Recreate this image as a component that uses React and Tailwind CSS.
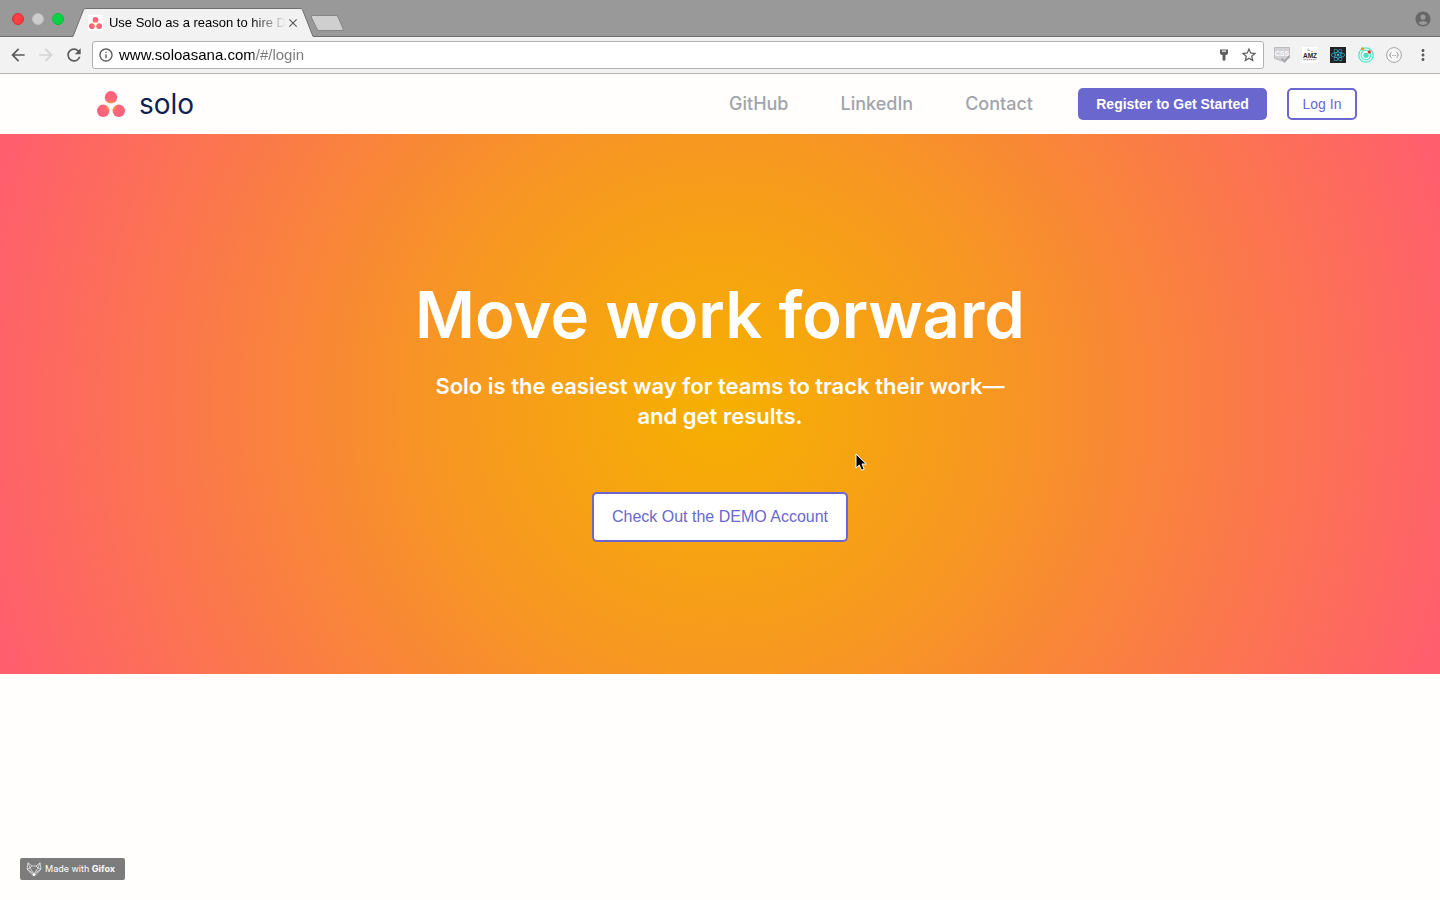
import { useState } from "react";
import {
  MdAccountCircle,
  MdArrowBack,
  MdArrowForward,
  MdClose,
  MdInfoOutline,
  MdMoreVert,
  MdRefresh,
  MdStarBorder,
} from "react-icons/md";
import { FaReact } from "react-icons/fa";

function SoloMark({ className }) {
  return (
    <svg viewBox="0 0 28 26" className={className} aria-hidden="true">
      <defs>
        <radialGradient id="mark" gradientUnits="userSpaceOnUse" cx="14" cy="15" r="14">
          <stop offset="0" stopColor="#ffa63c" />
          <stop offset="0.25" stopColor="#ff8e4c" />
          <stop offset="0.45" stopColor="#fc6a74" />
          <stop offset="1" stopColor="#fb5f80" />
        </radialGradient>
      </defs>
      <circle cx="14" cy="6.3" r="6.2" fill="url(#mark)" />
      <circle cx="6.2" cy="19.8" r="6.2" fill="url(#mark)" />
      <circle cx="21.8" cy="19.8" r="6.2" fill="url(#mark)" />
    </svg>
  );
}

function TitleBar() {
  return (
    <div className="flex h-[37px] items-end border-b border-[#6e6e6e] bg-[#999999] pl-3">
      <div className="flex gap-2 pb-[11px]">
        <button aria-label="Close window" className="size-3 rounded-full border border-[#d92f33] bg-[#fc3d42]" />
        <button aria-label="Minimize window" className="size-3 rounded-full border border-[#bcbcbc] bg-[#cdcdcd]" />
        <button aria-label="Zoom window" className="size-3 rounded-full border border-[#0dbb3a] bg-[#0bd444]" />
      </div>

      <div className="-mb-px ml-2 flex h-[29px]">
        <svg width="14" height="29" viewBox="0 0 14 29" aria-hidden="true">
          <path d="M0 28.5 H1 L11.5 1.8 Q12 0.5 14 0.5 V29 H0 Z" fill="#f2f2f2" />
          <path d="M0 28.5 H1 L11.5 1.8 Q12 0.5 14 0.5" fill="none" stroke="#6e6e6e" />
        </svg>
        <div className="flex w-[214px] items-center border-t border-[#6e6e6e] bg-[#f2f2f2]">
          <span className="ml-0.5 flex size-4 items-center justify-center bg-white">
            <SoloMark className="w-[13px]" />
          </span>
          <span className="ml-1.5 flex-1 text-[13px] whitespace-nowrap text-black [mask-image:linear-gradient(to_right,black_80%,transparent)]">
            Use Solo as a reason to hire D
          </span>
          <button aria-label="Close tab" className="text-[#5a5a5a]">
            <MdClose className="size-3.5" />
          </button>
        </div>
        <svg width="14" height="29" viewBox="0 0 14 29" aria-hidden="true">
          <path d="M14 28.5 H13 L2.5 1.8 Q2 0.5 0 0.5 V29 H14 Z" fill="#f2f2f2" />
          <path d="M14 28.5 H13 L2.5 1.8 Q2 0.5 0 0.5" fill="none" stroke="#6e6e6e" />
        </svg>
      </div>

      <button aria-label="New tab" className="mb-1 -ml-1">
        <svg width="34" height="17" viewBox="0 0 34 17" aria-hidden="true">
          <path
            d="M2.5 0.5 H26 Q27.5 0.5 28 2 L33 13.5 Q33.8 15.5 32 15.5 H9 Q7.5 15.5 7 14 L1.2 2 Q0.6 0.5 2.5 0.5 Z"
            fill="#cfcfcf"
            stroke="#858585"
          />
        </svg>
      </button>

      <button aria-label="Profile" className="mr-2 mb-2 ml-auto text-[#676767]">
        <MdAccountCircle className="size-[18px]" />
      </button>
    </div>
  );
}

function Extensions() {
  return (
    <div className="flex items-center gap-3 pl-2.5">
      <button aria-label="CSS viewer">
        <svg viewBox="0 0 16 16" className="size-4" aria-hidden="true">
          <path d="M0.5 0.5 H15.5 V10.5 L8 14 L0.5 11.5 Z" fill="#d2d2d4" stroke="#bcbcbe" />
          <text x="8" y="8.5" textAnchor="middle" fontSize="7" fontWeight="700" fill="#fff" fontFamily="Liberation Sans, sans-serif">
            CSS
          </text>
          <path d="M7.5 11.5 L10.5 14.5 L15.5 9" fill="none" stroke="#a9a9ab" strokeWidth="2" />
        </svg>
      </button>
      <button aria-label="AMZ tracker">
        <svg viewBox="0 0 16 16" className="size-4" aria-hidden="true">
          <rect width="16" height="16" fill="#fff" />
          <path d="M6 1.5 V3.5 H8" fill="none" stroke="#8fb4d4" />
          <path d="M9 4.5 H11" stroke="#f4a460" />
          <text x="8" y="10.5" textAnchor="middle" fontSize="6.5" fontWeight="700" fill="#222" fontFamily="Liberation Sans, sans-serif">
            AMZ
          </text>
          <path d="M1.5 12.5 H14.5" stroke="#999" strokeWidth="1.5" strokeDasharray="1.2 0.6" />
        </svg>
      </button>
      <button aria-label="React tools" className="flex size-4 items-center justify-center bg-[#222222] text-[#35b4e0]">
        <FaReact className="size-3.5" />
      </button>
      <button aria-label="Momentum">
        <svg viewBox="0 0 16 16" className="size-4" aria-hidden="true">
          <circle cx="8" cy="8" r="7.2" fill="#f2fdf9" stroke="#4ce8d0" strokeWidth="1.3" />
          <circle cx="8" cy="8" r="4.9" fill="none" stroke="#4ce8d0" strokeWidth="1.1" />
          <circle cx="8" cy="8.3" r="2.6" fill="#3fe3be" />
          <circle cx="4.5" cy="1.8" r="1.6" fill="#ff8a1f" />
          <circle cx="11.3" cy="5" r="1.7" fill="#f5322d" />
        </svg>
      </button>
      <button aria-label="JSON viewer">
        <svg viewBox="0 0 16 16" className="size-4" aria-hidden="true">
          <circle cx="8" cy="8" r="7.4" fill="#f8f8f8" stroke="#a3a3a3" />
          <path
            d="M5.5 5.5 Q4.4 5.5 4.4 6.5 Q4.4 8 3.4 8 Q4.4 8 4.4 9.5 Q4.4 10.5 5.5 10.5 M10.5 5.5 Q11.6 5.5 11.6 6.5 Q11.6 8 12.6 8 Q11.6 8 11.6 9.5 Q11.6 10.5 10.5 10.5"
            fill="none"
            stroke="#8a8a8a"
            strokeWidth="0.9"
          />
          <path d="M6.3 8.5 H9.9" stroke="#8a8a8a" strokeWidth="0.9" strokeDasharray="0.8 0.6" />
        </svg>
      </button>
      <button aria-label="Menu" className="text-[#5a5a5a]">
        <MdMoreVert className="size-4.5" />
      </button>
    </div>
  );
}

function Toolbar() {
  const [url, setUrl] = useState("www.soloasana.com/#/login");
  return (
    <div className="flex h-[37px] items-center border-b border-[#b4b4b4] bg-[#f2f2f2] px-2">
      <div className="flex gap-2 pr-2">
        <button aria-label="Back" className="text-[#5a5a5a]">
          <MdArrowBack className="size-5" />
        </button>
        <button aria-label="Forward" className="text-[#d3d3d3]">
          <MdArrowForward className="size-5" />
        </button>
        <button aria-label="Reload" className="text-[#5a5a5a]">
          <MdRefresh className="size-5" />
        </button>
      </div>
      <div className="flex h-7 flex-1 items-center rounded-[3px] border border-[#b0b0b0] bg-white px-[5px]">
        <MdInfoOutline className="size-4 text-[#5a5a5a]" />
        <input
          aria-label="Address"
          value={url}
          onChange={(e) => setUrl(e.target.value)}
          className="ml-[5px] flex-1 bg-[linear-gradient(to_right,#000_135px,#7a7a7a_135px)] bg-clip-text text-[15px] text-transparent caret-black outline-none"
        />
        <button aria-label="Saved passwords" className="mr-2">
          <svg viewBox="0 0 16 16" className="size-4" aria-hidden="true">
            <path fillRule="evenodd" d="M4 2.5 H12 V6 Q12 8 10 8 H9.5 V13 L8 14 L6.5 13 V8 H6 Q4 8 4 6 Z M6 3.6 V4.8 H10 V3.6 Z" fill="#5f5f5f" />
          </svg>
        </button>
        <button aria-label="Bookmark" className="text-[#5a5a5a]">
          <MdStarBorder className="size-[18px]" />
        </button>
      </div>
      <Extensions />
    </div>
  );
}

function SiteHeader() {
  return (
    <header className="flex h-[60px] items-center justify-between bg-[#fffefc] pr-[83px] pl-[97px]">
      <a href="#/" className="flex items-center gap-3.5">
        <SoloMark className="w-7" />
        <span className="text-[28px] leading-8 text-[#0e1f56] font-['Inter',sans-serif]">solo</span>
      </a>
      <nav className="flex items-center">
        <div className="flex gap-[52px] pr-[45px] text-lg font-medium text-[#a1a4aa] font-['Inter',sans-serif]">
          <a href="#github">GitHub</a>
          <a href="#linkedin">LinkedIn</a>
          <a href="#contact">Contact</a>
        </div>
        <button className="h-8 w-[189px] rounded-[5px] bg-[#6a67ce] text-sm font-bold text-white">
          Register to Get Started
        </button>
        <button className="ml-5 h-8 w-[70px] rounded-[5px] border-2 border-[#6a67ce] bg-white text-sm text-[#6a67ce]">
          Log In
        </button>
      </nav>
    </header>
  );
}

function Hero() {
  return (
    <section className="relative flex h-[540px] flex-col items-center bg-[radial-gradient(circle_at_center,#f6b000_0%,#f79722_36%,#f98638_54%,#ff5f6d_98%)] pt-[139px] text-center text-white">
      <h1 className="text-[65px] leading-[84px] font-semibold font-['Inter',sans-serif]">Move work forward</h1>
      <p className="mt-3.5 w-[600px] text-[22px] leading-[30px] font-semibold font-['Inter',sans-serif]">
        Solo is the easiest way for teams to track their work—
        <br />
        and get results.
      </p>
      <button className="mt-[61px] h-[50px] w-64 rounded-[5px] border-2 border-[#6a67ce] bg-white text-base text-[#6a67ce]">
        Check Out the DEMO Account
      </button>
      <svg width="14" height="20" viewBox="0 0 14 20" className="absolute top-[319px] left-1/2 ml-[135px]" aria-hidden="true">
        <path
          d="M1 1 V15 L4.3 12 L6.6 17.3 L9.2 16.2 L7 11 H11.3 Z"
          fill="#000"
          stroke="#fff"
          strokeWidth="1"
        />
      </svg>
    </section>
  );
}

function GifoxBadge() {
  return (
    <div className="fixed bottom-5 left-5 flex h-[22px] w-[105px] items-center gap-[3px] rounded-xs bg-[#7c7c7c] pl-1.5 text-[9px] whitespace-nowrap text-white font-['Inter',sans-serif]">
      <svg viewBox="0 0 16 15" className="w-4 shrink-0" fill="none" stroke="#e6e6e6" strokeWidth="0.8" aria-hidden="true">
        <path d="M2 0.8 L1 7 L4.5 11 L8 14 L11.5 11 L15 7 L14 0.8 L10 4 H6 Z M2 0.8 L4 6 L1 7 M14 0.8 L12 6 L15 7 M6 4 L4 6 L8 12 L12 6 L10 4 M1 7 L8 12 L15 7" />
        <circle cx="8" cy="12.7" r="1.3" fill="#fff" stroke="none" />
      </svg>
      <span>
        Made with <b>Gifox</b>
      </span>
    </div>
  );
}

export default function App() {
  return (
    <div className="min-h-screen bg-[#fffefc] font-['Liberation_Sans',Arial,sans-serif]">
      <TitleBar />
      <Toolbar />
      <SiteHeader />
      <Hero />
      <GifoxBadge />
    </div>
  );
}
